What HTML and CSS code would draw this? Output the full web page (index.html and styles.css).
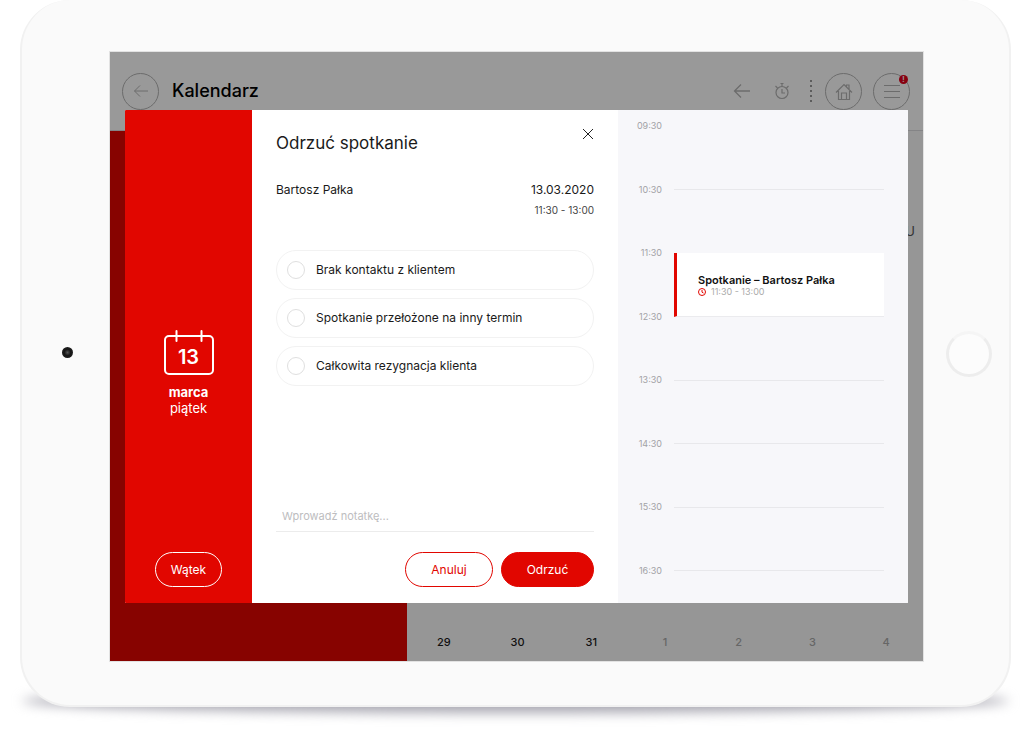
FILE: index.html
```html
<!DOCTYPE html>
<html lang="pl">
<head>
<meta charset="utf-8">
<meta name="viewport" content="width=device-width, initial-scale=1">
<title>Kalendarz</title>
<link rel="stylesheet" href="styles.css">
</head>
<body>
<div class="tablet">
  <div class="side side-left"><span class="camera"></span></div>
  <div class="screen">
    <div class="app">
      <header class="topbar">
        <button class="round" type="button" aria-label="Wstecz">
          <svg width="16" height="14" viewBox="0 0 16 14"><path d="M15 7H1.500M7 1.500 1.500 7 7 12.500"/></svg>
        </button>
        <h1 class="title">Kalendarz</h1>
        <div class="tools">
          <button class="plain" type="button" aria-label="Poprzedni">
            <svg width="18" height="16" viewBox="0 0 18 16" stroke-width="1.300"><path d="M17 8H1.500M8 1.500 1.500 8 8 14.500"/></svg>
          </button>
          <button class="plain timer" type="button" aria-label="Stoper">
            <svg width="16" height="18" viewBox="0 0 16 18" stroke-width="1.200"><circle cx="8" cy="10.500" r="6"/><path d="M8 4.500V1.500M6.500 1.500h3M8 7v4h3M3.500 6 1.500 4M12.500 6l2-2"/></svg>
          </button>
          <span class="dots"></span>
          <button class="round" type="button" aria-label="Start">
            <svg width="20" height="19" viewBox="0 0 20 19" stroke-width="1.200"><path d="M2 10.500 10 2.500l8 8M4.500 9v8.500h11V9M7.500 17.500v-6.500h5v6.500M12.500 4.500V3h2.500v4.500"/></svg>
          </button>
          <button class="round" type="button" aria-label="Menu">
            <svg width="18" height="15" viewBox="0 0 18 15"><path d="M1 1.500h16M1 7.500h16M1 13.500h16"/></svg>
            <span class="badge">!</span>
          </button>
        </div>
      </header>
      <main class="calendar">
        <div class="agenda"></div>
        <div class="month">
          <div class="weekday">U</div>
          <div class="days">
            <span>29</span><span>30</span><span>31</span>
            <span class="next">1</span><span class="next">2</span><span class="next">3</span><span class="next">4</span>
          </div>
        </div>
      </main>
    </div>
    <div class="overlay">
      <section class="modal" role="dialog" aria-labelledby="dialog-title">
        <aside class="date">
          <div class="date-info">
            <div class="date-icon">
              <svg width="50" height="46" viewBox="0 0 50 46"><rect x="1" y="6" width="48" height="38" rx="4"/><path d="M12.500 1v10M37.500 1v10"/></svg>
              <span class="date-number">13</span>
            </div>
            <strong>marca</strong>
            <span>piątek</span>
          </div>
          <button class="pill thread" type="button">Wątek</button>
        </aside>
        <form class="form">
          <div class="form-head">
            <h2 id="dialog-title">Odrzuć spotkanie</h2>
            <button class="close" type="button" aria-label="Zamknij">
              <svg width="12" height="12" viewBox="0 0 12 12"><path d="M1 1l10 10M11 1 1 11"/></svg>
            </button>
          </div>
          <div class="meeting">
            <span>Bartosz Pałka</span>
            <div class="when"><span>13.03.2020</span><small>11:30 - 13:00</small></div>
          </div>
          <div class="reasons">
            <label class="reason"><input type="radio" name="reason">Brak kontaktu z klientem</label>
            <label class="reason"><input type="radio" name="reason">Spotkanie przełożone na inny termin</label>
            <label class="reason"><input type="radio" name="reason">Całkowita rezygnacja klienta</label>
          </div>
          <input class="note" type="text" aria-label="Notatka" placeholder="Wprowadź notatkę...">
          <div class="actions">
            <button class="pill cancel" type="button">Anuluj</button>
            <button class="pill reject" type="submit">Odrzuć</button>
          </div>
        </form>
        <ol class="hours">
          <li class="hour first">09:30</li>
          <li class="hour">10:30</li>
          <li class="hour">11:30
            <article class="event">
              <h3>Spotkanie – Bartosz Pałka</h3>
              <p><svg width="8" height="8" viewBox="0 0 8 8"><circle cx="4" cy="4" r="3.500"/><path d="M4 2v2.200l1.500.800"/></svg>11:30 - 13:00</p>
            </article>
          </li>
          <li class="hour">12:30</li>
          <li class="hour">13:30</li>
          <li class="hour">14:30</li>
          <li class="hour">15:30</li>
          <li class="hour">16:30</li>
        </ol>
      </section>
    </div>
  </div>
  <div class="side side-right"><span class="home"></span></div>
</div>
</body>
</html>
```
FILE: styles.css
```css
* { box-sizing: border-box; }
body {
  margin: 0;
  padding: 0 13px 24px 20px;
  min-height: 100vh;
  display: flex;
  background: #fff;
  color: #1a1a1a;
  font-family: Inter, "Liberation Sans", sans-serif;
  font-size: 12px;
  line-height: 16px;
}
h1, h2, h3, p, ol { margin: 0; padding: 0; }
button, input { font: inherit; color: inherit; }
button { padding: 0; border: 0; background: none; cursor: pointer; }
svg { display: block; fill: none; stroke: currentColor; }

.tablet {
  position: relative;
  flex: 1;
  display: grid;
  grid-template-columns: 87px 1fr 85px;
  padding: 51px 0 43px;
  border: 2px solid #f1f1f1;
  border-width: 0 2px 2px;
  border-radius: 50px;
  background: #fafafa;
}
.tablet::before {
  content: "";
  position: absolute;
  z-index: -1;
  left: 0;
  right: 0;
  bottom: -8px;
  height: 24px;
  border-radius: 50%;
  background: #a9a8b2;
  filter: blur(6px);
}
.side { display: flex; align-items: center; justify-content: center; }
.side-left { padding: 0 0 8px 4px; }
.side-right { padding: 0 0 6px 4px; }
.camera {
  width: 11px;
  height: 11px;
  border-radius: 50%;
  background: radial-gradient(#555, #161616 40%, #222);
}
.home {
  width: 46px;
  height: 46px;
  border: 3px solid #ededed;
  border-top-color: #f5f5f5;
  border-radius: 50%;
  background: #fcfcfc;
}

.screen { display: grid; border: 1px solid #e2e2e2; }
.app, .overlay { grid-area: 1 / 1; }
.app { display: flex; flex-direction: column; background: #fafafb; }
.topbar {
  display: flex;
  align-items: center;
  gap: 13px;
  height: 79px;
  padding: 0 13px 0 12px;
  border-bottom: 1px solid #dcdce0;
  background: #fff;
  color: #b4b4b4;
}
.title { color: #000; font-size: 18px; line-height: 24px; font-weight: 500; }
.tools { display: flex; align-items: center; margin-left: auto; gap: 11px; }
.round {
  position: relative;
  display: flex;
  align-items: center;
  justify-content: center;
  width: 37px;
  height: 37px;
  border: 1px solid;
  border-radius: 50%;
}
.timer { margin: 0 9px 0 12px; }
.dots {
  width: 2px;
  height: 22px;
  margin-right: 2px;
  background: repeating-linear-gradient(#999 0 2px, transparent 2px 5px);
}
.badge {
  position: absolute;
  top: 1px;
  right: 1px;
  width: 9px;
  border-radius: 50%;
  background: #e3001b;
  color: #fff;
  font-size: 7px;
  line-height: 9px;
  font-weight: 700;
}
.calendar { flex: 1; display: grid; grid-template-columns: 297fr 516fr; }
.agenda { background: #e10600; }
.month { display: flex; flex-direction: column; justify-content: space-between; }
.weekday { padding: 92px 8px 0; text-align: right; font-size: 13px; color: #555; }
.days {
  display: grid;
  grid-template-columns: repeat(7, 1fr);
  padding-bottom: 11px;
  text-align: center;
  font-size: 11px;
  font-weight: 500;
}
.next { color: #aaa; }

.overlay {
  position: relative;
  display: flex;
  padding: 58px 15px;
  background: rgba(0, 0, 0, 0.4);
}
.modal {
  flex: 1;
  display: grid;
  grid-template-columns: 127fr 366fr 290fr;
  border-radius: 1px;
  background: #fff;
  overflow: hidden;
}
.date {
  display: flex;
  flex-direction: column;
  align-items: center;
  justify-content: space-between;
  padding: 220px 0 16px;
  background: #e10600;
  color: #fff;
}
.date-info { display: flex; flex-direction: column; align-items: center; font-size: 13px; }
.date-icon { position: relative; margin-bottom: 8px; }
.date-icon svg { stroke-width: 2; stroke-linecap: round; }
.date-number {
  position: absolute;
  inset: 15px 0 auto;
  text-align: center;
  font-size: 20px;
  line-height: 24px;
  font-weight: 600;
}
.pill { height: 35px; border: 1px solid; border-radius: 18px; }
.thread { width: 67px; }

.form { display: flex; flex-direction: column; padding: 18px 24px 16px; }
.form-head { display: flex; justify-content: space-between; align-items: flex-start; }
.form-head h2 { padding-top: 3px; font-size: 17px; line-height: 24px; font-weight: 400; }
.close svg { stroke: #222; }
.meeting { display: flex; justify-content: space-between; margin-top: 27px; }
.when { display: flex; flex-direction: column; gap: 4px; text-align: right; }
.when small { font-size: 10px; color: #444; }
.reasons { display: flex; flex-direction: column; gap: 8px; margin-top: 32px; }
.reason {
  display: flex;
  align-items: center;
  gap: 11px;
  height: 40px;
  padding: 0 10px;
  border: 1px solid #f2f2f2;
  border-radius: 20px;
}
.reason input {
  appearance: none;
  width: 18px;
  height: 18px;
  margin: 0;
  border: 1px solid #dfdfdf;
  border-radius: 50%;
}
.reason input:checked { border: 5px solid #e10600; }
.note {
  width: 100%;
  height: 32px;
  margin-top: auto;
  padding: 0 6px;
  border: 0;
  border-bottom: 1px solid #ececec;
  border-radius: 0;
  background: none;
  font-size: 11px;
}
.note::placeholder { color: #bdbdc0; opacity: 1; }
.actions { display: flex; justify-content: flex-end; gap: 8px; margin-top: 20px; }
.cancel { width: 88px; color: #e10600; }
.reject { width: 93px; border-color: #e10600; background: #e10600; color: #fff; }

.hours {
  display: flex;
  flex-direction: column;
  justify-content: space-between;
  padding: 10px 24px 26px 18px;
  background: #f7f7fa;
  list-style: none;
}
.hour {
  position: relative;
  display: grid;
  grid-template-columns: 26px 1fr;
  align-items: center;
  gap: 12px;
  font-size: 9px;
  line-height: 12px;
  text-align: right;
  color: #a2a2a6;
}
.hour::after { content: ""; height: 1px; background: #e8e8eb; }
.first::after { background: none; }
.event {
  position: absolute;
  left: 38px;
  right: 0;
  top: 6px;
  z-index: 1;
  height: 64px;
  padding: 19px 0 0 21px;
  border-bottom: 1px solid #ebebee;
  border-left: 3px solid #e10600;
  background: #fff;
  text-align: left;
}
.event h3 { font-size: 11px; line-height: 16px; font-weight: 600; color: #111; }
.event p { display: flex; align-items: center; gap: 5px; line-height: 8px; color: #aaa; }
.event svg { color: #e10600; }
```
